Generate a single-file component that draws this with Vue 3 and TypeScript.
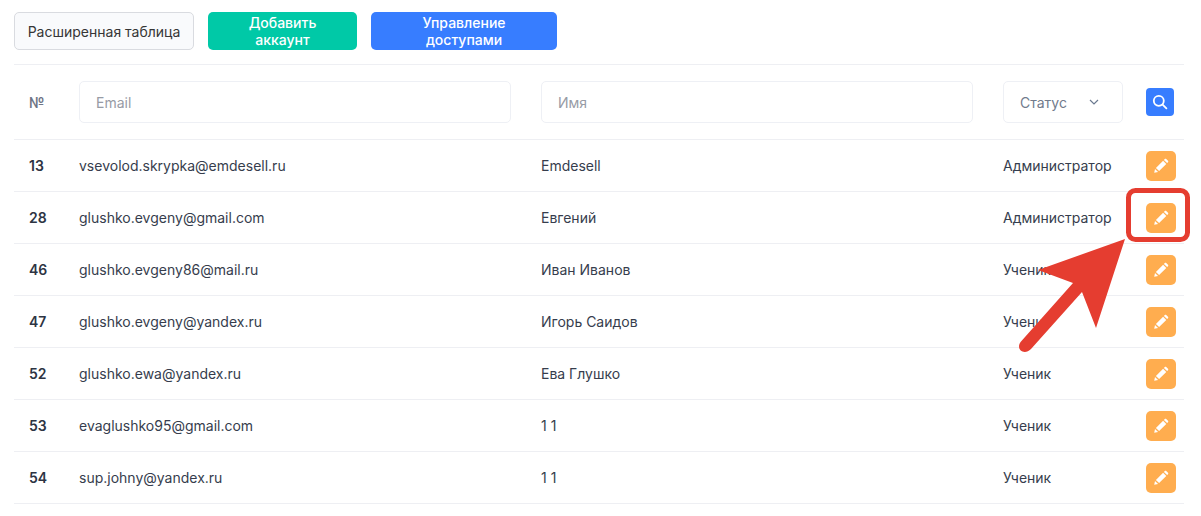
<script setup lang="ts">
interface Row { id: number; email: string; name: string; status: string }
const rows: Row[] = [
  { id: 13, email: 'vsevolod.skrypka@emdesell.ru', name: 'Emdesell', status: 'Администратор' },
  { id: 28, email: 'glushko.evgeny@gmail.com', name: 'Евгений', status: 'Администратор' },
  { id: 46, email: 'glushko.evgeny86@mail.ru', name: 'Иван Иванов', status: 'Ученик' },
  { id: 47, email: 'glushko.evgeny@yandex.ru', name: 'Игорь Саидов', status: 'Ученик' },
  { id: 52, email: 'glushko.ewa@yandex.ru', name: 'Ева Глушко', status: 'Ученик' },
  { id: 53, email: 'evaglushko95@gmail.com', name: '1 1', status: 'Ученик' },
  { id: 54, email: 'sup.johny@yandex.ru', name: '1 1', status: 'Ученик' },
]
</script>

<template>
  <div class="page">
    <div class="toolbar">
      <button class="btn btn-light">Расширенная таблица</button>
      <button class="btn btn-green">Добавить аккаунт</button>
      <button class="btn btn-blue">Управление доступами</button>
    </div>
    <div class="row head">
      <div class="num hash">№</div>
      <div class="cell"><input class="field" placeholder="Email" /></div>
      <div class="cell"><input class="field" placeholder="Имя" /></div>
      <div>
        <div class="select">
          <span>Статус</span>
          <svg width="10" height="6" viewBox="0 0 10 6" fill="none" stroke="#6b7a90" stroke-width="1.2"><path d="M1 1l4 4 4-4" /></svg>
        </div>
      </div>
      <div>
        <button class="search" aria-label="Поиск">
          <svg width="16" height="16" viewBox="0 0 16 16" fill="none" stroke="#fff" stroke-width="1.8" stroke-linecap="round"><circle cx="6.8" cy="6.8" r="5" /><path d="M10.6 10.6L14.4 14.4" /></svg>
        </button>
      </div>
    </div>
    <div v-for="r in rows" :key="r.id" class="row body">
      <div class="num">{{ r.id }}</div>
      <div>{{ r.email }}</div>
      <div>{{ r.name }}</div>
      <div>{{ r.status }}</div>
      <div>
        <button class="edit" aria-label="Изменить">
          <svg width="16" height="16" viewBox="0 0 16 16" fill="#fff"><path d="M1.2 14.8l.8-3.9 3.1 3.1zM2.9 9.9l7.2-7.2 3.2 3.2-7.2 7.2zM10.9 1.9l.9-.9c.4-.4 1-.4 1.4 0l1.8 1.8c.4.4.4 1 0 1.4l-.9.9z" /></svg>
        </button>
      </div>
    </div>
    <svg class="annotation" width="1201" height="516" viewBox="0 0 1201 516">
      <rect x="1128.5" y="190.5" width="59" height="49" rx="7" fill="none" stroke="#e53d30" stroke-width="5" />
      <path d="M1125 239L1038 270L1073 283L1021 341.5C1015 349 1024 356 1031 349L1082 292L1096 328Z" fill="#e53d30" />
    </svg>
  </div>
</template>

<style>
html, body { margin: 0; background: #fff; }
</style>

<style scoped>
.page {
  position: relative;
  width: 1201px;
  height: 516px;
  padding: 12px 17px 0 14px;
  box-sizing: border-box;
  overflow: hidden;
  font-family: Inter, "Noto Sans", sans-serif;
  font-size: 14px;
  color: #363d4d;
}
.toolbar {
  display: flex;
  gap: 14px;
  height: 52px;
  box-sizing: border-box;
  padding-bottom: 14px;
}
.btn {
  height: 38px;
  border-radius: 5px;
  border: 1px solid transparent;
  font: 500 14px Inter, "Noto Sans", sans-serif;
  padding: 0 12px;
  color: #fff;
}
.btn-light { background: #f9fafc; border-color: #d9dbe0; color: #363636; font-weight: 400; width: 180px; }
.btn-green { background: #00c9a7; width: 149px; }
.btn-blue { background: #377dff; width: 186px; }
.row {
  display: grid;
  grid-template-columns: 65px 462px 462px 143px 1fr;
  align-items: center;
  border-top: 1px solid #eeeff3;
}
.head { height: 74px; }
.body { height: 51px; }
.body:last-of-type { border-bottom: 1px solid #eeeff3; }
.num { padding-left: 15px; font-weight: 600; color: #2d3443; }
.hash { color: #6f7585; }
.cell { padding-right: 30px; }
.field {
  display: block;
  width: 100%;
  height: 42px;
  box-sizing: border-box;
  border: 1px solid #eef0f5;
  border-radius: 5px;
  padding: 0 16px;
  outline: none;
  font: 14px Inter, "Noto Sans", sans-serif;
  color: #363d4d;
}
.field::placeholder { color: #979ba5; opacity: 1; }
.select {
  width: 120px;
  height: 42px;
  box-sizing: border-box;
  border: 1px solid #eef0f5;
  border-radius: 5px;
  padding: 0 23px 0 16px;
  display: flex;
  align-items: center;
  justify-content: space-between;
  color: #717b8c;
}
.search, .edit {
  display: flex;
  align-items: center;
  justify-content: center;
  padding: 0;
  border: 0;
}
.search { width: 28px; height: 28px; border-radius: 4px; background: #377dff; }
.edit { width: 30px; height: 30px; border-radius: 5px; background: #ffad4f; }
.annotation { position: absolute; left: 0; top: 0; pointer-events: none; }
</style>
